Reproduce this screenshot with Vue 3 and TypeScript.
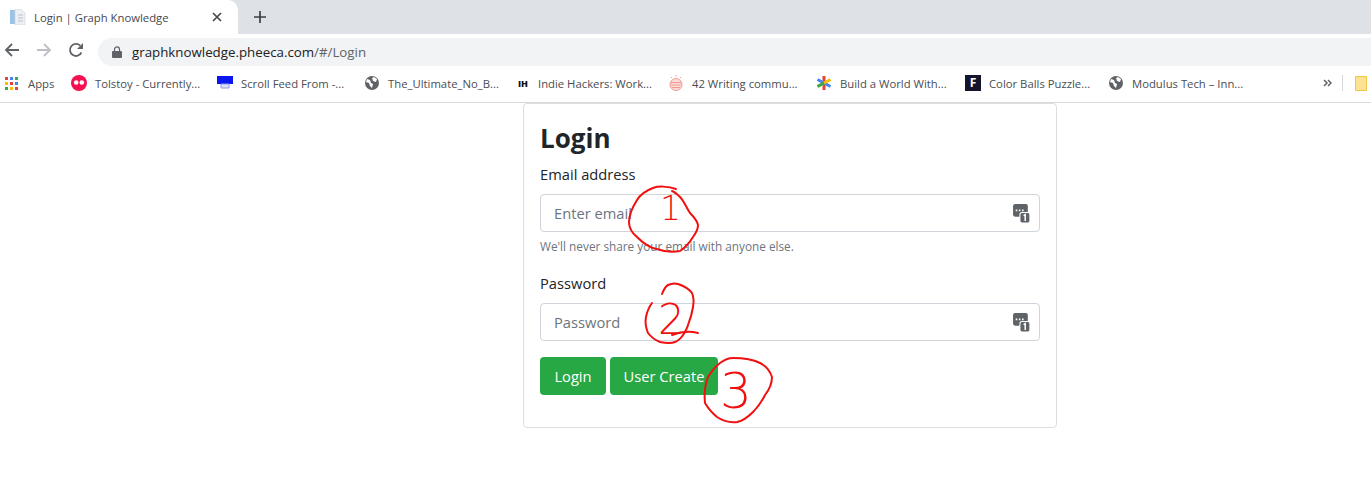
<script setup lang="ts">
const appColors = ["#ea4335", "#4285f4", "#34a853", "#fbbc04", "#ea4335", "#4285f4", "#34a853", "#fbbc04", "#ea4335"];
</script>

<template>
  <div class="page">
    <header class="chrome">
      <div class="tabstrip">
        <div class="tab">
          <svg class="favicon" width="16" height="16" viewBox="0 0 16 16">
            <rect x="0" y="1" width="5" height="14" fill="#9cc3e6" />
            <path d="M5 0h6l4 4v12H5z" fill="#eceff3" stroke="#cdd3da" stroke-width=".6" />
            <path d="M8 6h5M8 9h5M8 12h5" stroke="#b9c1cb" />
          </svg>
          <span class="tab-title">Login | Graph Knowledge</span>
          <svg class="tab-close" width="10" height="10" viewBox="0 0 10 10">
            <path d="M1 1l8 8M9 1l-8 8" stroke="#45484d" stroke-width="1.7" />
          </svg>
        </div>
        <svg class="new-tab" width="12" height="12" viewBox="0 0 12 12">
          <path d="M6 0v12M0 6h12" stroke="#3c4043" stroke-width="1.7" />
        </svg>
      </div>

      <div class="toolbar">
        <svg width="16" height="16" viewBox="0 0 16 16" class="nav">
          <path d="M15 8H2M8 2L2 8l6 6" fill="none" stroke="#5f6368" stroke-width="1.8" />
        </svg>
        <svg width="16" height="16" viewBox="0 0 16 16" class="nav">
          <path d="M1 8h13M8 2l6 6-6 6" fill="none" stroke="#bdc1c6" stroke-width="1.8" />
        </svg>
        <svg width="16" height="16" viewBox="0 0 16 16" class="nav">
          <path d="M13.4 10.5A6 6 0 1 1 12.2 3.7" fill="none" stroke="#5f6368" stroke-width="1.8" />
          <path d="M15 1v6H9z" fill="#5f6368" />
        </svg>
        <div class="omnibox">
          <svg width="10" height="12" viewBox="0 0 10 12">
            <path d="M1 5h8a1 1 0 0 1 1 1v5a1 1 0 0 1-1 1H1a1 1 0 0 1-1-1V6a1 1 0 0 1 1-1z" fill="#5f6368" />
            <path d="M2.5 5V3.4a2.5 2.5 0 0 1 5 0V5" fill="none" stroke="#5f6368" stroke-width="1.2" />
          </svg>
          <span class="url">graphknowledge.pheeca.com<span class="url-path">/#/Login</span></span>
        </div>
      </div>

      <nav class="bookmarks">
        <div class="bookmark">
          <div class="apps">
            <i v-for="(c, i) in appColors" :key="i" :style="{ background: c }"></i>
          </div>
          <span class="apps-label">Apps</span>
        </div>
        <div class="bookmark">
          <svg width="16" height="16" viewBox="0 0 16 16">
            <circle cx="8" cy="8" r="8" fill="#f5104f" />
            <circle cx="5.2" cy="7.5" r="2.3" fill="#fff" />
            <circle cx="10.8" cy="7.5" r="2.3" fill="#fff" />
          </svg>
          <span>Tolstoy - Currently...</span>
        </div>
        <div class="bookmark">
          <svg width="16" height="16" viewBox="0 0 16 16">
            <rect x="0" y="1" width="16" height="8" fill="#0a18ef" />
            <path d="M4 9h8v4H4z" fill="#dfe3f7" stroke="#8e97e8" />
          </svg>
          <span>Scroll Feed From -...</span>
        </div>
        <div class="bookmark">
          <svg width="16" height="16" viewBox="0 0 16 16">
            <circle cx="8" cy="8" r="7" fill="#5f6368" />
            <path d="M3 4l3 1 1 3 2 1-1 4-2-2-1-3-3-1zM10 2l3 2-1 3-3-1-1-3z" fill="#fff" />
          </svg>
          <span>The_Ultimate_No_B...</span>
        </div>
        <div class="bookmark ih-item">
          <span class="ih">IH</span>
          <span>Indie Hackers: Work...</span>
        </div>
        <div class="bookmark">
          <svg width="16" height="16" viewBox="0 0 16 16">
            <ellipse cx="8" cy="9.5" rx="6" ry="6" fill="#fbdcd8" stroke="#f19a90" />
            <path d="M3 7.5h10M2.8 10h10.4M4 12.5h8" stroke="#f19a90" />
            <path d="M3 2l1 1M8 0v1.5M13 2l-1 1" stroke="#f19a90" />
          </svg>
          <span>42 Writing commu...</span>
        </div>
        <div class="bookmark">
          <svg width="16" height="16" viewBox="0 0 16 16">
            <path d="M8 1v14" stroke="#ea4335" stroke-width="3" />
            <path d="M1.5 4.5l13 7" stroke="#4285f4" stroke-width="3" />
            <path d="M14.5 4.5l-13 7" stroke="#fbbc04" stroke-width="3" />
            <path d="M8 8l-6.5 3.5" stroke="#34a853" stroke-width="3" />
          </svg>
          <span>Build a World With...</span>
        </div>
        <div class="bookmark">
          <span class="f-icon">F</span>
          <span>Color Balls Puzzle...</span>
        </div>
        <div class="bookmark">
          <svg width="16" height="16" viewBox="0 0 16 16">
            <circle cx="8" cy="8" r="7" fill="#5f6368" />
            <path d="M3 4l3 1 1 3 2 1-1 4-2-2-1-3-3-1zM10 2l3 2-1 3-3-1-1-3z" fill="#fff" />
          </svg>
          <span>Modulus Tech – Inn...</span>
        </div>
        <div class="bookmark-end">
          <svg width="9" height="8" viewBox="0 0 9 8">
            <path d="M1 1l3 3-3 3M5 1l3 3-3 3" fill="none" stroke="#5f6368" stroke-width="1.5" />
          </svg>
          <i class="divider"></i>
          <svg width="12" height="15" viewBox="0 0 12 15">
            <path d="M.5.5h11v14H.5z" fill="#fde293" stroke="#f0c649" />
          </svg>
        </div>
      </nav>
    </header>

    <main class="content">
      <section class="card">
        <h1>Login</h1>
        <label class="field-label">Email address</label>
        <div class="input">
          <span>Enter email</span>
          <svg class="key" width="17" height="19" viewBox="0 0 16 18">
            <rect x="0" y="0" width="14" height="12" rx="2" fill="#5f6368" />
            <path d="M2.5 6h1.5M5.5 6h1.5M8.5 6h1.5" stroke="#fff" stroke-width="1.5" />
            <rect x="6.5" y="8" width="9.5" height="10" rx="2" fill="#5f6368" stroke="#fff" />
            <path d="M10 11l1.5-1v6" fill="none" stroke="#fff" stroke-width="1.4" />
          </svg>
        </div>
        <small>We'll never share your email with anyone else.</small>
        <label class="field-label second">Password</label>
        <div class="input">
          <span>Password</span>
          <svg class="key" width="17" height="19" viewBox="0 0 16 18">
            <rect x="0" y="0" width="14" height="12" rx="2" fill="#5f6368" />
            <path d="M2.5 6h1.5M5.5 6h1.5M8.5 6h1.5" stroke="#fff" stroke-width="1.5" />
            <rect x="6.5" y="8" width="9.5" height="10" rx="2" fill="#5f6368" stroke="#fff" />
            <path d="M10 11l1.5-1v6" fill="none" stroke="#fff" stroke-width="1.4" />
          </svg>
        </div>
        <div class="actions">
          <button type="button" class="login-btn">Login</button>
          <button type="button" class="create-btn">User Create</button>
        </div>
      </section>
    </main>

    <!-- red pen marks drawn over the form -->
    <svg class="marks" width="1371" height="482" viewBox="0 0 1371 482">
      <g fill="none" stroke="#f01010" stroke-width="2" stroke-linecap="round" stroke-linejoin="round">
        <path d="M676 189C668 186 658 186 653 188C645 191 640 195 637 200C632 208 629 215 629 222C629 229 632 233 637 237C643 243 650 248 657 249C665 252 674 252 680 251C686 247 690 242 693 237C696 233 698 229 698 225C697 220 694 217 690 213C686 207 684 201 680 197C677 194 675 192 672 191" />
        <path d="M662 294C664 289 666 286 668 285C672 283 675 283 678 284C684 286 689 289 692 293C694 298 694 302 693 307C692 314 690 320 688 325C687 329 685 332 683 335C681 338 678 341 675 342C670 344 665 343 660 342C655 340 651 337 648 333C646 328 645 322 646 317C647 312 649 307 652 303" />
        <path d="M672 335C680 332 690 331 698 333" />
        <path d="M720 363C724 360 729 358 733 358C743 358 752 359 760 363C766 366 770 371 772 377C772 384 769 390 765 395C762 401 758 407 753 412C748 417 743 421 737 422C729 423 723 421 717 417C712 413 708 408 705 403C704 394 705 385 708 377C711 372 715 367 720 363" />
      </g>
    </svg>
    <span class="mark-digit one">1</span>
    <span class="mark-digit two">2</span>
    <span class="mark-digit three">3</span>
  </div>
</template>

<style>
html,
body {
  margin: 0;
  background: #fff;
}
</style>

<style scoped>
.page {
  position: relative;
  width: 1371px;
  height: 482px;
  overflow: hidden;
  font-family: "Open Sans", "Noto Sans", sans-serif;
  color: #212529;
}
.chrome {
  display: flex;
  flex-direction: column;
  height: 103px;
  box-sizing: border-box;
  border-bottom: 1px solid #d8d9db;
}
.tabstrip {
  display: flex;
  align-items: center;
  height: 34px;
  background: #dee1e6;
}
.tab {
  display: flex;
  align-items: center;
  width: 238px;
  height: 34px;
  box-sizing: border-box;
  padding: 0 16px 0 10px;
  background: #fff;
  border-radius: 0 10px 0 0;
}
.favicon {
  margin-right: 8px;
}
.tab-title {
  flex: 1;
  font-size: 11.3px;
  color: #45484d;
}
.new-tab {
  margin-left: 16px;
}
.toolbar {
  display: flex;
  align-items: center;
  height: 32px;
  box-sizing: border-box;
  padding-left: 4px;
}
.nav {
  flex: none;
  margin-right: 16px;
}
.omnibox {
  flex: 1;
  display: flex;
  align-items: center;
  gap: 10px;
  height: 28px;
  margin-top: 4px;
  margin-left: -2px;
  padding-left: 14px;
  background: #f1f3f4;
  border-radius: 14px 0 0 14px;
}
.url {
  font-size: 13.3px;
  color: #202124;
}
.url-path {
  color: #5f6368;
}
.bookmarks {
  flex: 1;
  display: grid;
  grid-template-columns: 66px 146px 147px 152px 152px 148px 149px 143px 215px 1fr;
  align-items: center;
  padding-left: 5px;
  padding-bottom: 2px;
  font-size: 11.3px;
  color: #4a4d52;
}
.bookmark {
  display: flex;
  align-items: center;
  gap: 8px;
  white-space: nowrap;
}
.apps {
  display: grid;
  grid-template-columns: repeat(3, 3px);
  gap: 2px;
}
.apps i {
  width: 3px;
  height: 3px;
}
.apps-label {
  margin-left: 2px;
}
.ih {
  width: 14px;
  font-size: 9px;
  font-weight: 800;
  color: #111;
  text-align: center;
}
.f-icon {
  display: block;
  width: 16px;
  height: 16px;
  background: #14142b;
  color: #fff;
  font-size: 12px;
  font-weight: 700;
  line-height: 16px;
  text-align: center;
}
.bookmark-end {
  display: flex;
  align-items: center;
}
.bookmark-end svg:last-child {
  margin-left: 12px;
}
.divider {
  width: 1px;
  height: 16px;
  margin-left: 10px;
  background: #d5d7da;
}
.content {
  display: flex;
  padding-left: 523px;
}
.card {
  display: flex;
  flex-direction: column;
  width: 534px;
  height: 325px;
  box-sizing: border-box;
  padding: 15px 16px 0;
  background: #fff;
  border: 1px solid #dcdee1;
  border-radius: 4px;
}
h1 {
  margin: 0;
  font-size: 26px;
  font-weight: 700;
  line-height: 38px;
  color: #212529;
}
.field-label {
  margin-top: 5px;
  font-size: 14.7px;
  line-height: 24px;
}
.field-label.second {
  margin-top: 15px;
}
.input {
  display: flex;
  align-items: center;
  justify-content: space-between;
  height: 38px;
  box-sizing: border-box;
  margin-top: 8px;
  padding: 0 9px 0 13px;
  border: 1px solid #ced4da;
  border-radius: 4px;
  font-size: 14.7px;
  color: #6c757d;
}
small {
  margin-top: 4px;
  font-size: 11.8px;
  line-height: 20px;
  color: #6c757d;
}
.actions {
  display: flex;
  gap: 4px;
  margin-top: 16px;
}
button {
  height: 38px;
  padding: 0;
  border: 0;
  border-radius: 4px;
  background: #28a745;
  color: #fff;
  font-family: inherit;
  font-size: 14.7px;
}
.login-btn {
  width: 66px;
}
.create-btn {
  width: 108px;
}
.marks {
  position: absolute;
  top: 0;
  left: 0;
  pointer-events: none;
}
.mark-digit {
  position: absolute;
  color: #f01010;
  font-family: "DejaVu Sans", sans-serif;
  font-weight: 200;
  line-height: 1;
}
.mark-digit.one {
  left: 660px;
  top: 192px;
  font-size: 33px;
}
.mark-digit.two {
  left: 658px;
  top: 299px;
  font-size: 42px;
}
.mark-digit.three {
  left: 720px;
  top: 366px;
  font-size: 50px;
}
</style>
